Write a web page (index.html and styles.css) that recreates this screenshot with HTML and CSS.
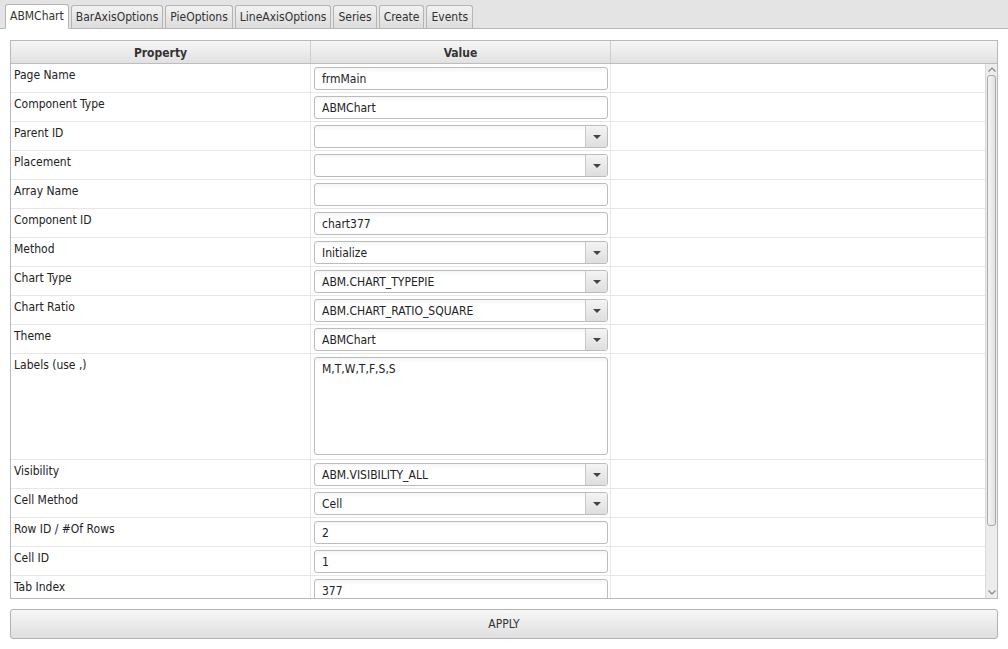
FILE: index.html
```html
<!DOCTYPE html>
<html>
<head>
<meta charset="utf-8">
<link rel="stylesheet" href="styles.css">
</head>
<body>
<div class="tabbar">
  <div class="tab active">ABMChart</div>
  <div class="tab">BarAxisOptions</div>
  <div class="tab">PieOptions</div>
  <div class="tab">LineAxisOptions</div>
  <div class="tab">Series</div>
  <div class="tab">Create</div>
  <div class="tab">Events</div>
</div>
<div class="content">
  <div class="grid">
    <div class="ghead">
      <div class="hc c1">Property</div>
      <div class="hc c2">Value</div>
      <div class="hc c3"></div>
    </div>
    <div class="gbody">
      <div class="rows">
        <div class="row"><div class="cell c1">Page Name</div><div class="cell c2"><div class="inp">frmMain</div></div><div class="cell c3"></div></div>
        <div class="row"><div class="cell c1">Component Type</div><div class="cell c2"><div class="inp">ABMChart</div></div><div class="cell c3"></div></div>
        <div class="row"><div class="cell c1">Parent ID</div><div class="cell c2"><div class="inp sel"><span class="val"></span><span class="btn"><i></i></span></div></div><div class="cell c3"></div></div>
        <div class="row"><div class="cell c1">Placement</div><div class="cell c2"><div class="inp sel"><span class="val"></span><span class="btn"><i></i></span></div></div><div class="cell c3"></div></div>
        <div class="row"><div class="cell c1">Array Name</div><div class="cell c2"><div class="inp"></div></div><div class="cell c3"></div></div>
        <div class="row"><div class="cell c1">Component ID</div><div class="cell c2"><div class="inp">chart377</div></div><div class="cell c3"></div></div>
        <div class="row"><div class="cell c1">Method</div><div class="cell c2"><div class="inp sel"><span class="val">Initialize</span><span class="btn"><i></i></span></div></div><div class="cell c3"></div></div>
        <div class="row"><div class="cell c1">Chart Type</div><div class="cell c2"><div class="inp sel"><span class="val">ABM.CHART_TYPEPIE</span><span class="btn"><i></i></span></div></div><div class="cell c3"></div></div>
        <div class="row"><div class="cell c1">Chart Ratio</div><div class="cell c2"><div class="inp sel"><span class="val">ABM.CHART_RATIO_SQUARE</span><span class="btn"><i></i></span></div></div><div class="cell c3"></div></div>
        <div class="row"><div class="cell c1">Theme</div><div class="cell c2"><div class="inp sel"><span class="val">ABMChart</span><span class="btn"><i></i></span></div></div><div class="cell c3"></div></div>
        <div class="row tall"><div class="cell c1">Labels (use ,)</div><div class="cell c2"><div class="inp area">M,T,W,T,F,S,S</div></div><div class="cell c3"></div></div>
        <div class="row"><div class="cell c1">Visibility</div><div class="cell c2"><div class="inp sel"><span class="val">ABM.VISIBILITY_ALL</span><span class="btn"><i></i></span></div></div><div class="cell c3"></div></div>
        <div class="row"><div class="cell c1">Cell Method</div><div class="cell c2"><div class="inp sel"><span class="val">Cell</span><span class="btn"><i></i></span></div></div><div class="cell c3"></div></div>
        <div class="row"><div class="cell c1">Row ID / #Of Rows</div><div class="cell c2"><div class="inp">2</div></div><div class="cell c3"></div></div>
        <div class="row"><div class="cell c1">Cell ID</div><div class="cell c2"><div class="inp">1</div></div><div class="cell c3"></div></div>
        <div class="row"><div class="cell c1">Tab Index</div><div class="cell c2"><div class="inp">377</div></div><div class="cell c3"></div></div>
      </div>
      <div class="sbar">
        <div class="arrow up"><svg width="8" height="5" viewBox="0 0 8 5"><path d="M0.5 4.5 L4 1 L7.5 4.5" fill="none" stroke="#888" stroke-width="1.2"/></svg></div>
        <div class="track"><div class="thumb"></div></div>
        <div class="arrow down"><svg width="8" height="5" viewBox="0 0 8 5"><path d="M0.5 0.5 L4 4 L7.5 0.5" fill="none" stroke="#888" stroke-width="1.2"/></svg></div>
      </div>
    </div>
  </div>
  <div class="apply">APPLY</div>
</div>
</body>
</html>
```

FILE: styles.css
```css
* { box-sizing: border-box; }
html, body { margin: 0; padding: 0; background: #fff; }
body {
  width: 1008px;
  height: 649px;
  overflow: hidden;
  font-family: "DejaVu Sans Condensed", "DejaVu Sans", sans-serif;
  font-size: 12px;
  color: #222;
}
.tabbar {
  height: 29px;
  background: #e4e4e4;
  border-bottom: 1px solid #b8b8b8;
  display: flex;
  align-items: flex-end;
  padding-left: 5px;
  gap: 2px;
}
.tab {
  height: 24px;
  padding: 0 4px;
  line-height: 22px;
  border: 1px solid #b5b5b5;
  border-radius: 3px 3px 0 0;
  background: linear-gradient(#f2f2f2, #dcdcdc);
  color: #333;
  margin-bottom: -1px;
  border-bottom: 1px solid #b8b8b8;
}
.tab.active {
  background: #fff;
  border-bottom-color: #fff;
  height: 25px;
}
.content {
  padding: 11px 10px 0 10px;
}
.grid {
  width: 988px;
  height: 559px;
  border: 1px solid #b9b9b9;
  display: flex;
  flex-direction: column;
}
.ghead {
  height: 23px;
  display: flex;
  background: linear-gradient(#f6f6f6, #e1e1e1);
  border-bottom: 1px solid #bdbdbd;
  flex: none;
}
.hc {
  font-weight: bold;
  color: #333;
  text-align: center;
  padding-top: 1px;
  line-height: 22px;
  border-right: 1px solid #cfcfcf;
}
.hc.c3 { border-right: none; flex: 1; }
.c1 { width: 300px; flex: none; }
.c2 { width: 300px; flex: none; }
.c3 { flex: 1; }
.gbody {
  flex: 1;
  display: flex;
  overflow: hidden;
}
.rows {
  flex: 1;
  overflow: hidden;
}
.row {
  height: 29px;
  display: flex;
  border-bottom: 1px solid #e6e6e6;
}
.row.tall { height: 106px; }
.cell {
  border-right: 1px solid #e6e6e6;
}
.cell.c3 { border-right: none; }
.cell.c1 {
  padding: 4px 0 0 3px;
  line-height: 14px;
  color: #222;
}
.cell.c2 {
  padding: 3px 2px 0 3px;
}
.inp {
  height: 23px;
  width: 294px;
  border: 1px solid #bcbcbc;
  border-radius: 3px;
  background: linear-gradient(#f6f6f6, #ffffff 5px);
  padding-left: 7px;
  line-height: 22px;
  color: #222;
  display: flex;
}
.inp.area {
  height: 98px;
  display: block;
  padding-top: 3px;
  line-height: 16px;
}
.inp.sel { padding-left: 0; }
.inp.sel .val { flex: 1; padding-left: 7px; }
.inp.sel .btn {
  width: 22px;
  border-left: 1px solid #c8c8c8;
  background: linear-gradient(#f4f4f4, #dedede);
  border-radius: 0 2px 2px 0;
  display: flex;
  align-items: center;
  justify-content: center;
}
.inp.sel .btn i {
  width: 0;
  height: 0;
  border-left: 4px solid transparent;
  border-right: 4px solid transparent;
  border-top: 4px solid #444;
}
.sbar {
  width: 12px;
  flex: none;
  background: #ececec;
  border-left: 1px solid #dadada;
  display: flex;
  flex-direction: column;
}
.arrow {
  height: 11px;
  display: flex;
  align-items: center;
  justify-content: center;
}
.track {
  flex: 1;
}
.thumb {
  margin: 0 1px;
  height: 451px;
  border: 1px solid #a9a9a9;
  border-radius: 3px;
  background: linear-gradient(90deg, #f4f4f4, #e2e2e2);
}
.apply {
  margin-top: 10px;
  width: 988px;
  height: 30px;
  border: 1px solid #b2b2b2;
  border-radius: 3px;
  background: linear-gradient(#f7f7f7, #dfdfdf);
  text-align: center;
  line-height: 29px;
  color: #333;
}
```
